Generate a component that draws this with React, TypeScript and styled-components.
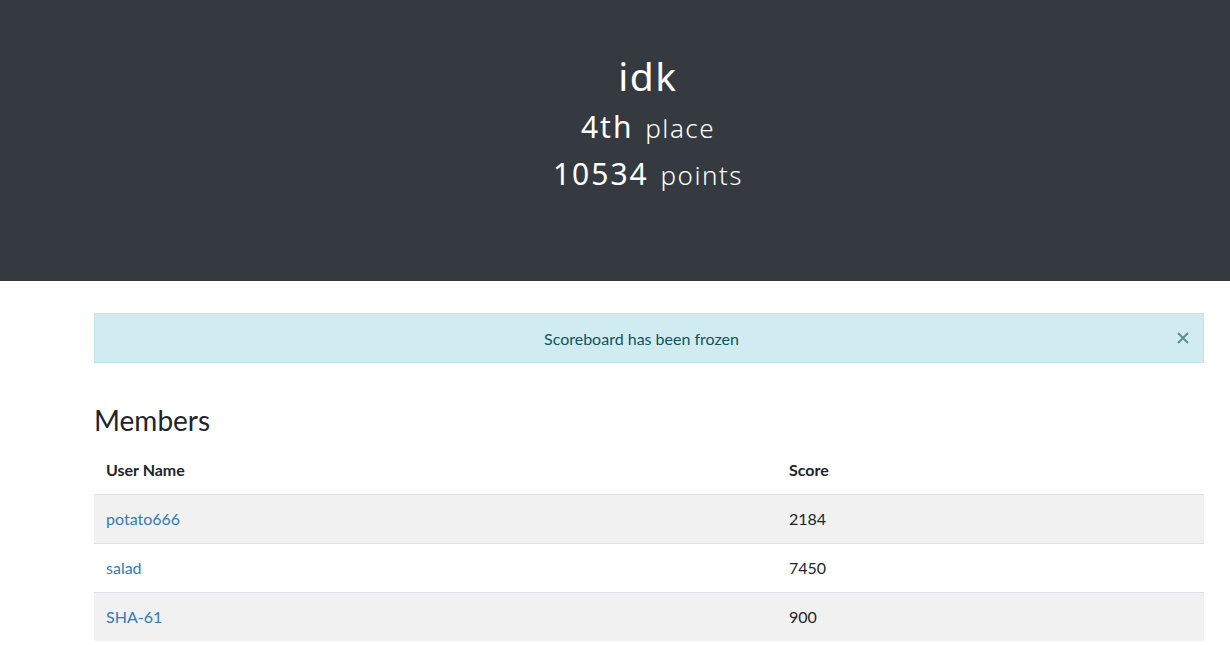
import styled, { createGlobalStyle } from 'styled-components'

const GlobalStyle = createGlobalStyle`
  html, body {
    margin: 0;
    padding: 0;
    background: #fff;
  }
  body {
    font-family: Lato, 'Liberation Sans', sans-serif;
    font-size: 16px;
    line-height: 1.5;
    color: #212529;
  }
`

const Jumbotron = styled.div`
  background-color: #343a40;
  color: #fff;
  text-align: center;
  height: 281px;
  box-sizing: border-box;
  padding-top: 52px;
  padding-left: 66px;
  margin-bottom: 32px;
  font-family: 'Noto Sans', Lato, sans-serif;
`

const TeamName = styled.h1`
  margin: 0 0 8px;
  font-size: 39px;
  font-weight: 400;
  line-height: 48px;
  letter-spacing: 1.5px;
`

const Stat = styled.h2`
  margin: 0 0 8px;
  font-size: 30px;
  font-weight: 400;
  line-height: 38px;
  letter-spacing: 2px;
`

const Small = styled.small`
  font-size: 26px;
  font-weight: 300;
  letter-spacing: 1.5px;
  margin-left: 2px;
`

const Container = styled.div`
  width: 1110px;
  margin: 0 auto;
  padding-left: 94px;
  box-sizing: content-box;
  padding-right: 26px;
`

const Alert = styled.div`
  position: relative;
  background-color: #d1ecf1;
  border: 1px solid #bee5eb;
  color: #0c5460;
  padding: 13px 35px 11px 20px;
  line-height: 24px;
  text-align: center;
  margin-bottom: 40px;
`

const Close = styled.button`
  position: absolute;
  top: 50%;
  right: 12px;
  transform: translateY(-50%);
  background: none;
  border: 0;
  padding: 0;
  width: 16px;
  height: 16px;
  display: flex;
  align-items: center;
  justify-content: center;
  opacity: 0.55;
  cursor: pointer;
`

const Heading = styled.h3`
  margin: 0 0 9px;
  font-size: 28px;
  font-weight: 400;
  line-height: 34px;
  color: #212529;
`

const Table = styled.table`
  width: 100%;
  border-collapse: collapse;
`

const Th = styled.th`
  text-align: left;
  padding: 12px 12px;
  font-size: 16px;
  font-weight: 700;
  line-height: 24px;
  border-bottom: 1px solid #dee2e6;
`

const Row = styled.tr<{ $striped: boolean }>`
  background: ${(p) => (p.$striped ? '#f1f1f1' : '#fff')};
`

const Td = styled.td`
  padding: 12px 12px;
  font-size: 16px;
  border-top: 1px solid #dee2e6;
  line-height: 24px;
`

const UserLink = styled.a`
  color: #337ab7;
  text-decoration: none;
`

const members = [
  { name: 'potato666', score: 2184 },
  { name: 'salad', score: 7450 },
  { name: 'SHA-61', score: 900 },
]

export default function App() {
  return (
    <>
      <GlobalStyle />
      <Jumbotron>
        <TeamName>idk</TeamName>
        <Stat>
          4th <Small>place</Small>
        </Stat>
        <Stat>
          10534 <Small>points</Small>
        </Stat>
      </Jumbotron>
      <Container>
        <Alert>
          Scoreboard has been frozen
          <Close aria-label='Close'>
            <svg width='12' height='12' viewBox='0 0 12 12'>
              <path d='M1 1L11 11M11 1L1 11' stroke='#0c3c44' strokeWidth='2' />
            </svg>
          </Close>
        </Alert>
        <Heading>Members</Heading>
        <Table>
          <colgroup>
            <col style={{ width: 683 }} />
            <col />
          </colgroup>
          <thead>
            <tr>
              <Th>User Name</Th>
              <Th>Score</Th>
            </tr>
          </thead>
          <tbody>
            {members.map((m, i) => (
              <Row key={m.name} $striped={i % 2 === 0}>
                <Td>
                  <UserLink href='#'>{m.name}</UserLink>
                </Td>
                <Td>{m.score}</Td>
              </Row>
            ))}
          </tbody>
        </Table>
      </Container>
    </>
  )
}
